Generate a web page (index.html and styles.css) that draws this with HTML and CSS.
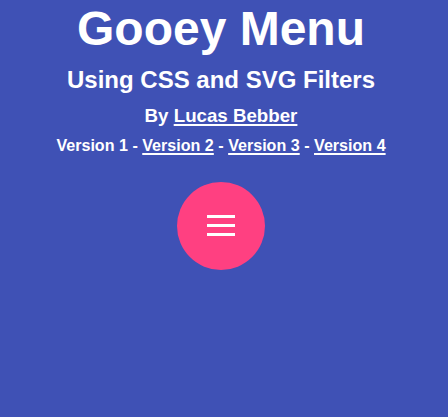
FILE: index.html
```html
<!DOCTYPE html>
<html>
<head>
<meta charset="utf-8">
<link rel="stylesheet" href="styles.css">
</head>
<body>
<div class="page">
  <h1 class="title">Gooey Menu</h1>
  <h2 class="subtitle">Using CSS and SVG Filters</h2>
  <h3 class="author">By <a href="#">Lucas Bebber</a></h3>
  <h4 class="versions">Version 1 - <a href="#">Version 2</a> - <a href="#">Version 3</a> - <a href="#">Version 4</a></h4>
  <div class="menu">
    <div class="menu-button">
      <span class="bar"></span>
      <span class="bar"></span>
      <span class="bar"></span>
    </div>
  </div>
</div>
</body>
</html>
```
FILE: styles.css
```css
html, body {
  margin: 0;
  padding: 0;
  background: #3F51B5;
  height: 100%;
}
body {
  color: #ffffff;
  font-family: "Liberation Sans", Arial, sans-serif;
}
.page {
  width: 442px;
  padding-top: 1px;
  display: flex;
  flex-direction: column;
  align-items: center;
  text-align: center;
}
.page a {
  color: inherit;
  text-decoration-thickness: 2px;
  text-underline-offset: 2px;
}
.title {
  font-size: 48px;
  font-weight: bold;
  margin: 0;
}
.subtitle {
  font-size: 24px;
  font-weight: bold;
  margin: 10px 0 0;
}
.author {
  font-size: 18.72px;
  font-weight: bold;
  margin: 11px 0 0;
}
.versions {
  font-size: 16.1px;
  font-weight: bold;
  margin: 9px 0 0;
}
.menu {
  margin-top: 26.5px;
}
.menu-button {
  width: 88px;
  height: 88px;
  border-radius: 50%;
  background: #FF4081;
  display: flex;
  flex-direction: column;
  align-items: center;
  justify-content: center;
  gap: 5.5px;
}
.bar {
  display: block;
  width: 27.5px;
  height: 3.3px;
  background: #ffffff;
}
```
